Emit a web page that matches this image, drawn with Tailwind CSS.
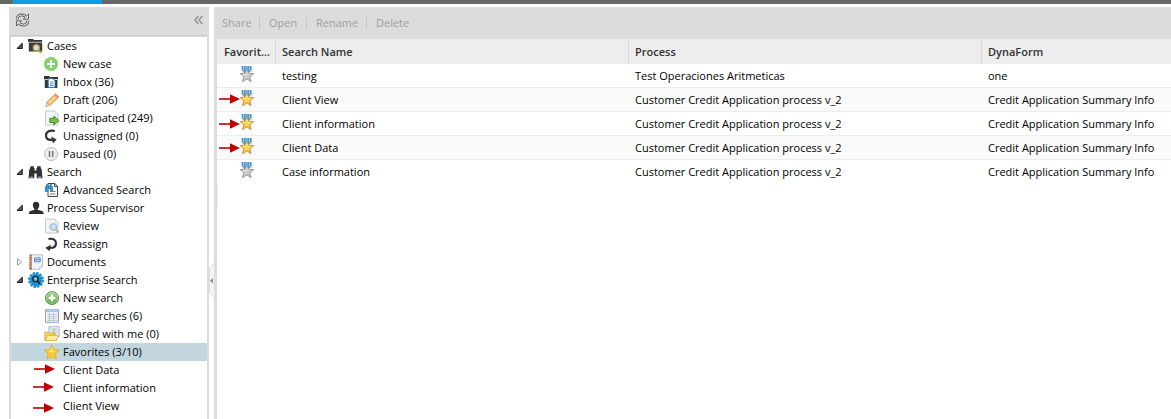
<!DOCTYPE html>
<html lang="en">
<head>
<meta charset="utf-8">
<title>Enterprise Search</title>
<script src="https://cdn.jsdelivr.net/npm/@tailwindcss/browser@4"></script>
</head>
<body class="h-[419px] overflow-hidden bg-white font-['Open_Sans',sans-serif] text-[11px] leading-[18px] text-black">
<svg class="size-0">
  <defs>
    <linearGradient id="gold" x1="0" y1="0" x2="0" y2="1"><stop offset="0" stop-color="#ffe9a0"/><stop offset=".6" stop-color="#fbd65c"/><stop offset="1" stop-color="#efae2c"/></linearGradient>
    <linearGradient id="silver" x1="0" y1="0" x2="1" y2="1"><stop offset="0" stop-color="#f0f0f0"/><stop offset="1" stop-color="#b4b4b4"/></linearGradient>
    <linearGradient id="green" x1="0" y1="0" x2="0" y2="1"><stop offset="0" stop-color="#a5d68a"/><stop offset="1" stop-color="#4fa03c"/></linearGradient>
  </defs>
  <symbol id="open" viewBox="0 0 8 8"><path d="M6.3 1.2v5.3H.9z" fill="#555" stroke="#222" stroke-width="1"/></symbol>
  <symbol id="closed" viewBox="0 0 8 8"><path d="M1.5.6v6.8L5.8 4z" fill="#fff" stroke="#999" stroke-width=".9"/></symbol>
  <symbol id="arrow" viewBox="0 0 21 10"><path d="M0 5h13" stroke="#c00000" stroke-width="1.6"/><path d="M11 .2v9.600L21 5z" fill="#c00000"/></symbol>
  <symbol id="cases" viewBox="0 0 16 16"><path d="M0 1h5l1 1h8v2H0z" fill="#333"/><path d="M.8 4.500h13.400v9H.8z" fill="#3d3d3d"/><path d="M0 3.600h14.500" stroke="#777" stroke-width=".6"/><circle cx="8.300" cy="9.700" r="3.200" fill="#cfdce6" stroke="#b98e24" stroke-width="1.200"/><path d="M10.700 12.200l2.300 2.600" stroke="#c89a22" stroke-width="1.800"/></symbol>
  <symbol id="newcase" viewBox="0 0 16 16"><circle cx="7" cy="8" r="7" fill="#82d16b"/><path d="M7 4v8M3 8h8" stroke="#fff" stroke-width="2.200"/></symbol>
  <symbol id="inbox" viewBox="0 0 16 16"><path d="M0 2h5l1 1h8v2.200H0z" fill="#333"/><path d="M.8 6h12.600v8H.8z" fill="#333b42"/><path d="M4.300 4.700h4.500L11 7v6.300H4.300z" fill="#fff" stroke="#3080b0" stroke-width=".8"/><path d="M6 8h3.500M6 9.800h3.500M6 11.500h3.500" stroke="#3a8abd" stroke-width=".9"/></symbol>
  <symbol id="draft" viewBox="0 0 16 16"><path d="M2 14.300l1.200-4.600L11.600 1.700l3.200 3.200-8.400 8z" fill="#f3bd6c" stroke="#c98d3c" stroke-width=".8"/><path d="M5 11L12.800 3.300" stroke="#ffe0a6" stroke-width="1.200"/><path d="M11.600 1.700l3.200 3.200-1.600 1.500-3.200-3.100z" fill="#e59a57"/><path d="M2 14.300l1-3.600 2.600 2.500z" fill="#f7e2c0" stroke="#b98a50" stroke-width=".4"/></symbol>
  <symbol id="page" viewBox="0 0 16 16"><path d="M1.500 1h9.700l2.800 2.800V15H1.500z" fill="#f2f5f5" stroke="#bfc5c8" stroke-width=".9"/><path d="M11 1v3h3" fill="#fff" stroke="#c5c9cc" stroke-width=".7"/></symbol>
  <symbol id="participated" viewBox="0 0 16 16"><use href="#page" width="16" height="16"/><path d="M5.800 8.300h4V6l5.200 4.500-5.200 4.500v-2.500h-4z" fill="#79bd46" stroke="#3b8521" stroke-width=".9"/></symbol>
  <symbol id="unassigned" viewBox="0 0 16 16"><path d="M10.800 3C5 1.600 2 4.200 2 7.400c0 2.700 2 4.400 5.200 4.400H9" fill="none" stroke="#333" stroke-width="2.200"/><path d="M7.200 8.600l5.400 3-3.600 4z" fill="#333"/></symbol>
  <symbol id="paused" viewBox="0 0 16 16"><circle cx="7.100" cy="8" r="6.500" fill="#eee" stroke="#bdbdbd"/><path d="M5.500 5v6M8.700 5v6" stroke="#777" stroke-width="1.500"/></symbol>
  <symbol id="binoculars" viewBox="0 0 16 16"><path d="M2.300 2.200h3.500v1.700h.7v2.600h2V3.900h.7V2.200h3.500v1.700l1 1.600.8 8.700H8.700V9.500H6.300v4.700H.5l.8-8.700 1-1.600z" fill="#303030"/><path d="M1.700 13.200h3.400M9.900 13.200h3.400" stroke="#a6c9dd" stroke-width="1"/></symbol>
  <symbol id="advsearch" viewBox="0 0 16 16"><path d="M4 1.500h6.800L13.500 4v10.500H4z" fill="#fff" stroke="#444"/><path d="M10.500 1.500v3h3" fill="none" stroke="#444"/><path d="M6 9.500h5.500M6 12h5.500" stroke="#777"/><path d="M2.200 2h2v1.300h1.600V2h2v1.500L9 5v4.500H6V7H4.200v3H.8V5l1.400-1.500z" fill="#3c8fc2"/></symbol>
  <symbol id="user" viewBox="0 0 16 16"><path d="M8 1.700c2.300 0 3.500 1.500 3.300 3.700-.1 1.500-.8 2.900-1.700 3.500v.8l4.600 1.300c1 .4 1.400 1.400 1.400 2.900H.9c0-1.500.4-2.500 1.400-2.900l4.300-1.300v-.8c-.9-.6-1.600-2-1.700-3.500C4.700 3.200 5.800 1.700 8 1.700z" fill="#2f2f2f"/></symbol>
  <symbol id="review" viewBox="0 0 16 16"><use href="#page" width="16" height="16"/><circle cx="9.300" cy="9" r="3.400" fill="#c6e1f5" stroke="#8fb5d8"/><path d="M11.800 11.700l2.700 2.800" stroke="#d29b68" stroke-width="1.500"/></symbol>
  <symbol id="reassign" viewBox="0 0 16 16"><path d="M4.500 3c5-1 7.500 1.200 7.500 4.200 0 3-2.200 4.800-6 4.800" fill="none" stroke="#333" stroke-width="2.200"/><path d="M7 8.700l-5.700 3 4.200 3.500z" fill="#333"/></symbol>
  <symbol id="documents" viewBox="0 0 16 16"><path d="M2 .8h12.500v11.700l-2.500 2.700H2z" fill="#f1f3f6" stroke="#a8adb8" stroke-width=".8"/><path d="M2.600.6v14.800" stroke="#b45e3c" stroke-width="2.200"/><path d="M.7 2.500h3M.7 5h3M.7 7.500h3M.7 10h3M.7 12.500h3" stroke="#e2c3ac" stroke-width=".7"/><path d="M6.500 3.800h5.700v4H6.500z" fill="#dce9fa" stroke="#4f7fc4" stroke-width=".9"/><path d="M7 5.800h5" stroke="#4f7fc4"/><path d="M11.800 15v-2.700h2.700" fill="#fff" stroke="#a8adb8" stroke-width=".7"/></symbol>
  <symbol id="gear" viewBox="0 0 16 16"><circle cx="8" cy="8" r="7.200" fill="#1c94d6" opacity=".45"/><circle cx="8" cy="8" r="6.600" fill="none" stroke="#1c94d6" stroke-width="2.800" stroke-dasharray="2.300 1.156"/><circle cx="8" cy="8" r="6" fill="#1a8fd3"/><circle cx="7.500" cy="7" r="2.600" fill="#7fc1e6" stroke="#13232e" stroke-width="1.400"/><path d="M9.400 9l2.600 3" stroke="#13232e" stroke-width="1.900"/></symbol>
  <symbol id="newsearch" viewBox="0 0 16 16"><circle cx="8" cy="8" r="6.600" fill="url(#green)" stroke="#5aa34a" stroke-width=".9"/><circle cx="8" cy="8" r="5.400" fill="none" stroke="#b9dfaa" stroke-width=".7"/><path d="M8 4.600v6.800M4.600 8h6.800" stroke="#fff" stroke-width="2.400"/></symbol>
  <symbol id="table" viewBox="0 0 16 16"><path d="M1.500 1.800h13v12.500h-13z" fill="#fff" stroke="#7f9fd4"/><path d="M2 2.300h12v2H2z" fill="#a7c4ee"/><path d="M3 6.200h10.500M3 8.200h10.500M3 10.200h10.500M3 12.300h10.500" stroke="#a2b3c6" stroke-width=".8"/><path d="M5.500 5v9M9.500 5v9" stroke="#9dbb9a" stroke-width=".7"/></symbol>
  <symbol id="shared" viewBox="0 0 16 16"><path d="M5 .8h10v9.800H5z" fill="#fff" stroke="#86a5d8" stroke-width=".9"/><path d="M6.500 3h7.500M6.500 5h7.500M6.500 7h7.500M10 2.500v6" stroke="#97b59a" stroke-width=".8"/><path d="M.8 6h4l1 1.300h5.500V14H.8z" fill="#f8d46b" stroke="#d5a437" stroke-width=".8"/><path d="M3.400 9.300h10.800l-1.600 5.300H.9z" fill="#ffeaa2" stroke="#d5a437" stroke-width=".8"/></symbol>
  <symbol id="star" viewBox="0 0 16 16"><path d="M7.700.8l2.200 4.700 5.300.7-3.900 3.600 1 5.300-4.600-2.600-4.700 2.600 1-5.300L.3 6.200l5.300-.7z" fill="#fbc934" stroke="#e3a624" stroke-width=".8" stroke-linejoin="round"/><path d="M7.700 3l1.300 3.400 3.500.6-5.500 1-4-1 3.300-.6z" fill="#ffe37c"/></symbol>
  <symbol id="ribbon" viewBox="0 0 16 18"><path d="M2.700 1h9.900v4.200L9.700 8H5.600L2.700 5.200z" fill="#4b94c8"/><path d="M4.700 1v5M10.500 1v5" stroke="#a6d0ec" stroke-width="1"/><path d="M6.300 1h2.800v4H6.300z" fill="#73afd8"/></symbol>
  <symbol id="medal" viewBox="0 0 16 18"><use href="#ribbon" width="16" height="18"/><path d="M7.800 3.700l1.900 4.500 4.900.4-3.700 3.100 1.200 4.900-4.300-2.700-4.200 2.700 1.200-4.900L1.100 8.600l4.900-.4z" fill="url(#gold)" stroke="#c98d25" stroke-width=".9" stroke-linejoin="round"/></symbol>
  <symbol id="medaloff" viewBox="0 0 16 18"><use href="#ribbon" width="16" height="18"/><path d="M7.800 3.700l1.900 4.500 4.900.4-3.700 3.100 1.200 4.900-4.300-2.700-4.200 2.700 1.200-4.900L1.100 8.600l4.900-.4z" fill="url(#silver)" stroke="#8e8e8e" stroke-width=".9" stroke-linejoin="round"/></symbol>
</svg>

<div class="flex h-1 bg-[#666]"><div class="ml-[13px] w-[89px] bg-[#0c9fe6]"></div></div>

<div class="mt-[3px] flex h-[412px]">
  <aside class="ml-[9px] w-[200px] shrink-0 border-x-2 border-[#dcdcdc]">
    <header class="flex h-[29px] items-center justify-between border-b border-[#c8c8c8] bg-[#dcdcdc] pr-1 pl-1">
      <svg class="-mt-0.5 h-4 w-[15px]" viewBox="0 0 15 16" fill="none" stroke="#555" stroke-width="2.800"><path d="M2 7.200C2.500 4 5 2.600 7.500 3c1.500.2 2.700 1 3.500 2.200"/><path d="M13 8.800c-.5 3.200-3 4.600-5.500 4.200-1.500-.2-2.700-1-3.500-2.200"/><path d="M13.500 2v5.200H8.300zM1.500 14V8.800h5.200z" fill="#e6e6e6" stroke-width=".9"/><path d="M2 7.200C2.500 4 5 2.600 7.500 3c1.500.2 2.700 1 3.500 2.200M13 8.800c-.5 3.200-3 4.600-5.500 4.200-1.500-.2-2.700-1-3.500-2.200" stroke="#e6e6e6" stroke-width="1.100"/></svg>
      <svg class="-mt-0.5 h-2.5 w-[9px]" viewBox="0 0 9 10" fill="none" stroke="#909090" stroke-width="1.400"><path d="M4.300 1L1 5l3.300 4M8.300 1L5 5l3.300 4"/></svg>
    </header>
    <ul class="border-t border-[#dcdcdc] whitespace-nowrap">
      <li class="flex h-[18px] items-center pl-[5px]"><svg class="mr-1 size-2"><use href="#open"/></svg><svg class="mr-[3px] size-4"><use href="#cases"/></svg>Cases</li>
      <li class="flex h-[18px] items-center pl-[33px]"><svg class="mr-[3px] size-4"><use href="#newcase"/></svg>New case</li>
      <li class="flex h-[18px] items-center pl-[33px]"><svg class="mr-[3px] size-4"><use href="#inbox"/></svg>Inbox (36)</li>
      <li class="flex h-[18px] items-center pl-[33px]"><svg class="mr-[3px] size-4"><use href="#draft"/></svg>Draft (206)</li>
      <li class="flex h-[18px] items-center pl-[33px]"><svg class="mr-[3px] size-4"><use href="#participated"/></svg>Participated (249)</li>
      <li class="flex h-[18px] items-center pl-[33px]"><svg class="mr-[3px] size-4"><use href="#unassigned"/></svg>Unassigned (0)</li>
      <li class="flex h-[18px] items-center pl-[33px]"><svg class="mr-[3px] size-4"><use href="#paused"/></svg>Paused (0)</li>
      <li class="flex h-[18px] items-center pl-[5px]"><svg class="mr-1 size-2"><use href="#open"/></svg><svg class="mr-[3px] size-4"><use href="#binoculars"/></svg>Search</li>
      <li class="flex h-[18px] items-center pl-[33px]"><svg class="mr-[3px] size-4"><use href="#advsearch"/></svg>Advanced Search</li>
      <li class="flex h-[18px] items-center pl-[5px]"><svg class="mr-1 size-2"><use href="#open"/></svg><svg class="mr-[3px] size-4"><use href="#user"/></svg>Process Supervisor</li>
      <li class="flex h-[18px] items-center pl-[33px]"><svg class="mr-[3px] size-4"><use href="#review"/></svg>Review</li>
      <li class="flex h-[18px] items-center pl-[33px]"><svg class="mr-[3px] size-4"><use href="#reassign"/></svg>Reassign</li>
      <li class="flex h-[18px] items-center pl-[5px]"><svg class="mr-1 size-2"><use href="#closed"/></svg><svg class="mr-[3px] size-4"><use href="#documents"/></svg>Documents</li>
      <li class="flex h-[18px] items-center pl-[5px]"><svg class="mr-1 size-2"><use href="#open"/></svg><svg class="mr-[3px] size-4"><use href="#gear"/></svg>Enterprise Search</li>
      <li class="flex h-[18px] items-center pl-[33px]"><svg class="mr-[3px] size-4"><use href="#newsearch"/></svg>New search</li>
      <li class="flex h-[18px] items-center pl-[33px]"><svg class="mr-[3px] size-4"><use href="#table"/></svg>My searches (6)</li>
      <li class="flex h-[18px] items-center pl-[33px]"><svg class="mr-[3px] size-4"><use href="#shared"/></svg>Shared with me (0)</li>
      <li class="flex h-[18px] items-center bg-[#c1d6de] pl-[33px]"><svg class="mr-[3px] size-4"><use href="#star"/></svg>Favorites (3/10)</li>
      <li class="flex h-[18px] items-center pl-[23px]"><svg class="-mt-[3px] mr-2 h-2.5 w-[21px]"><use href="#arrow"/></svg>Client Data</li>
      <li class="flex h-[18px] items-center pl-[22px]"><svg class="-mt-[3px] mr-[9px] h-2.5 w-[21px]"><use href="#arrow"/></svg>Client information</li>
      <li class="flex h-[18px] items-center pl-[22px]"><svg class="mt-[3px] mr-[9px] h-2.5 w-[21px]"><use href="#arrow"/></svg>Client View</li>
    </ul>
  </aside>

  <div class="flex w-[5px] shrink-0 flex-col pt-[256px]">
    <svg class="h-[35px] w-[5px]" viewBox="0 0 5 35"><path d="M5 .5L.5 5v25L5 34.500" fill="#f3f3f3" stroke="#dedede"/><path d="M4 15v5.500L1 17.700z" fill="#888"/></svg>
  </div>

  <main class="flex min-w-0 grow flex-col whitespace-nowrap border-l-[3px] border-[#dcdcdc]">
    <div class="flex h-8 items-center bg-[#dcdcdc] pl-[5px] text-[#a0a0a0]">
      <span class="w-[37px]">Share</span><i class="mr-[9px] h-3 w-px bg-[#c6c6c6]"></i>
      <span class="w-[37px]">Open</span><i class="mr-[9px] h-3 w-px bg-[#c6c6c6]"></i>
      <span class="w-[50px]">Rename</span><i class="mr-[9px] h-3 w-px bg-[#c6c6c6]"></i>
      <span>Delete</span>
    </div>
    <div class="grid h-[25px] grid-cols-[59px_353px_353px_1fr] bg-[#ededed] pt-px leading-6 font-semibold text-[#333]">
      <div class="border-r border-[#d8d8d8] pl-[7px]">Favorit...</div>
      <div class="border-r border-[#d8d8d8] pl-[6px]">Search Name</div>
      <div class="border-r border-[#d8d8d8] pl-[6px]">Process</div>
      <div class="pl-[6px]">DynaForm</div>
    </div>
    <div class="leading-6">
      <div class="grid h-6 grid-cols-[59px_353px_353px_1fr] border-b border-[#ededed]">
        <div class="flex pl-[22px]"><svg class="mt-px h-[18px] w-4"><use href="#medaloff"/></svg></div><div class="pl-[6px]">testing</div><div class="pl-[6px]">Test Operaciones Aritmeticas</div><div class="pl-[6px]">one</div>
      </div>
      <div class="grid h-6 grid-cols-[59px_353px_353px_1fr] border-b border-[#ededed] bg-[#fafafa]">
        <div class="flex pl-[2px]"><svg class="mt-[6px] -mr-px h-2.5 w-[21px]"><use href="#arrow"/></svg><svg class="mt-px h-[18px] w-4"><use href="#medal"/></svg></div><div class="pl-[6px]">Client View</div><div class="pl-[6px]">Customer Credit Application process v_2</div><div class="pl-[6px]">Credit Application Summary Info</div>
      </div>
      <div class="grid h-6 grid-cols-[59px_353px_353px_1fr] border-b border-[#ededed]">
        <div class="flex pl-[2px]"><svg class="mt-[7px] -mr-px h-2.5 w-[21px]"><use href="#arrow"/></svg><svg class="mt-px h-[18px] w-4"><use href="#medal"/></svg></div><div class="pl-[6px]">Client information</div><div class="pl-[6px]">Customer Credit Application process v_2</div><div class="pl-[6px]">Credit Application Summary Info</div>
      </div>
      <div class="grid h-6 grid-cols-[59px_353px_353px_1fr] border-b border-[#ededed] bg-[#fafafa]">
        <div class="flex pl-[2px]"><svg class="mt-[7px] -mr-px h-2.5 w-[21px]"><use href="#arrow"/></svg><svg class="mt-px h-[18px] w-4"><use href="#medal"/></svg></div><div class="pl-[6px]">Client Data</div><div class="pl-[6px]">Customer Credit Application process v_2</div><div class="pl-[6px]">Credit Application Summary Info</div>
      </div>
      <div class="grid h-6 grid-cols-[59px_353px_353px_1fr]">
        <div class="flex pl-[22px]"><svg class="mt-px h-[18px] w-4"><use href="#medaloff"/></svg></div><div class="pl-[6px]">Case information</div><div class="pl-[6px]">Customer Credit Application process v_2</div><div class="pl-[6px]">Credit Application Summary Info</div>
      </div>
      <div class="h-6 w-0.5 border-y border-l border-[#ededed]"></div>
    </div>
  </main>
</div>
</body>
</html>
